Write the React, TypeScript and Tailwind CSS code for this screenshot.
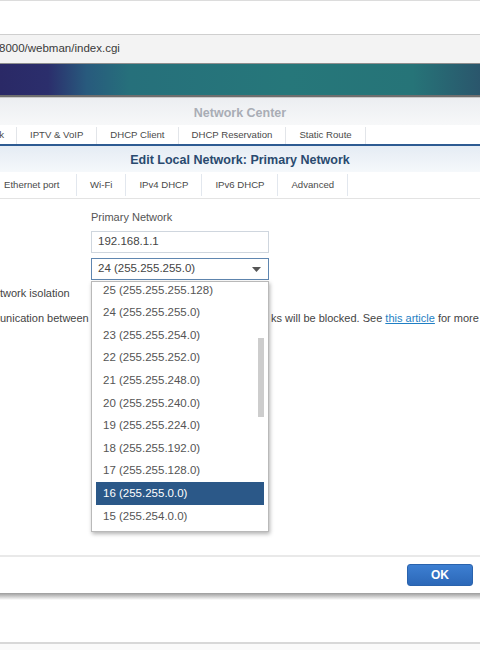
const font = "font-['Liberation_Sans','Arial',sans-serif]"

const topTabs = ['IPTV & VoIP', 'DHCP Client', 'DHCP Reservation', 'Static Route']
const subTabs = ['Wi-Fi', 'IPv4 DHCP', 'IPv6 DHCP', 'Advanced']
const masks = [
  '25 (255.255.255.128)',
  '24 (255.255.255.0)',
  '23 (255.255.254.0)',
  '22 (255.255.252.0)',
  '21 (255.255.248.0)',
  '20 (255.255.240.0)',
  '19 (255.255.224.0)',
  '18 (255.255.192.0)',
  '17 (255.255.128.0)',
  '16 (255.255.0.0)',
  '15 (255.254.0.0)',
]
const SELECTED = '16 (255.255.0.0)'

export default function App() {
  return (
    <div className={`relative h-[650px] w-[480px] overflow-hidden bg-white ${font}`}>
      {/* browser chrome */}
      <div className="h-[34px] border-t border-[#dcdcdc] bg-white" />
      <div className="flex h-[30px] items-center border-y border-[#cfcfcf] bg-[#f3f3f3] border-b-[#8e8e8e]">
        <span className="-ml-px text-[11.5px] text-[#3a3a3a]">8000/webman/index.cgi</span>
      </div>

      {/* DSM banner */}
      <div className="h-[31px] bg-[linear-gradient(90deg,#2a2966_0%,#2b2e6c_10%,#285a7d_18%,#26707b_27%,#26777a_60%,#267478_86%,#2a566c_100%)]" />
      <div className="h-[2px] bg-[#6e6e6e]" />
      <div className="h-px bg-[#c9c9c9]" />

      {/* Network Center window */}
      <div className="flex h-[27px] items-center justify-center bg-gradient-to-b from-[#eceef1] to-[#f7f8f9] pt-[3px]">
        <span className="text-[12.5px] font-bold text-[#a9adb5]">Network Center</span>
      </div>
      <div className="flex h-[19px] items-stretch bg-white pt-[2px] text-[9.6px] text-[#4a4a4a]">
        <div className="flex w-[17px] shrink-0 items-center justify-end overflow-hidden whitespace-nowrap border-r border-[#e2e5e9] pr-[12px]">
          Local Network
        </div>
        {topTabs.map(t => (
          <div key={t} className="flex items-center whitespace-nowrap border-r border-[#e2e5e9] px-[13px]">{t}</div>
        ))}
      </div>
      <div className="h-[2px] bg-[#2d5b92]" />

      {/* Edit dialog */}
      <div className="flex h-[26px] items-center justify-center bg-gradient-to-b from-[#e5ecf4] to-[#f5f8fb] pt-[3px]">
        <span className="text-[12.5px] font-bold text-[#2a4a6f]">Edit Local Network: Primary Network</span>
      </div>
      <div className="flex h-[27px] items-stretch border-b border-[#e3e3e3] bg-white py-[2px] text-[9.6px] text-[#4a4a4a]">
        <div className="flex w-[77px] items-center whitespace-nowrap border-r border-[#e2e7ee] pl-[4px]">Ethernet port</div>
        {subTabs.map(t => (
          <div key={t} className="flex items-center whitespace-nowrap border-r border-[#e2e7ee] px-[13px]">{t}</div>
        ))}
      </div>

      {/* form body */}
      <div className="h-[356px] bg-white pt-[10px]">
        <div className="ml-[91px] text-[11px] leading-[16px] text-[#555]">Primary Network</div>
        <div className="ml-[91px] mt-[6px] flex h-[22px] w-[178px] items-center border border-[#cfd6de] pl-[6px] text-[11.5px] text-[#444]">
          192.168.1.1
        </div>
        <div className="ml-[91px] mt-[5px] flex h-[22px] w-[178px] items-center justify-between border border-[#5f86b0] pl-[6px] pr-[7px] text-[11.5px] text-[#444]">
          <span>24 (255.255.255.0)</span>
          <svg width="9" height="5" viewBox="0 0 9 5"><path d="M0 0h9L4.5 5z" fill="#555" /></svg>
        </div>
        <div className="mt-[5px] text-[11px] leading-[16px] text-[#444]">twork isolation</div>
        <div className="mt-[9px] flex whitespace-nowrap text-[11px] leading-[16px] text-[#444]">
          <span className="w-[271px] shrink-0 overflow-hidden">unication between different local networks</span>
          <span>
            ks will be blocked. See <span className="text-[#1f7fc4] underline">this article</span> for more
          </span>
        </div>
      </div>

      {/* footer */}
      <div className="h-[2px] bg-[#e9e9e9]" />
      <div className="flex h-[36px] items-center justify-end bg-white pr-[7px]">
        <button className="h-[22px] w-[66px] rounded-[3px] border border-[#2a63ad] bg-gradient-to-b from-[#3d7fd2] to-[#2c68b8] text-[12px] font-bold text-white">
          OK
        </button>
      </div>
      <div className="h-[7px] bg-gradient-to-b from-[#9c9c9c] to-white" />
      <div className="h-[42px] bg-white" />
      <div className="h-[2px] bg-[#d8d8d8]" />
      <div className="h-[6px] bg-[#fafafa]" />

      {/* open subnet mask list */}
      <div className="absolute left-[91px] top-[281px] h-[251px] w-[178px] overflow-hidden border border-[#b9b9b9] bg-white shadow-[1px_2px_4px_rgba(0,0,0,0.3)]">
        <div className="-mt-[3px]">
          {masks.map(m => (
            <div
              key={m}
              className={`mx-[4px] flex h-[22.6px] items-center pl-[7px] text-[11.5px] ${m === SELECTED ? 'bg-[#2b5888] text-white' : 'text-[#555]'}`}
            >
              {m}
            </div>
          ))}
        </div>
        <div className="absolute right-[4px] top-[56px] h-[79px] w-[6px] bg-[#cdcdcd]" />
      </div>
    </div>
  )
}
